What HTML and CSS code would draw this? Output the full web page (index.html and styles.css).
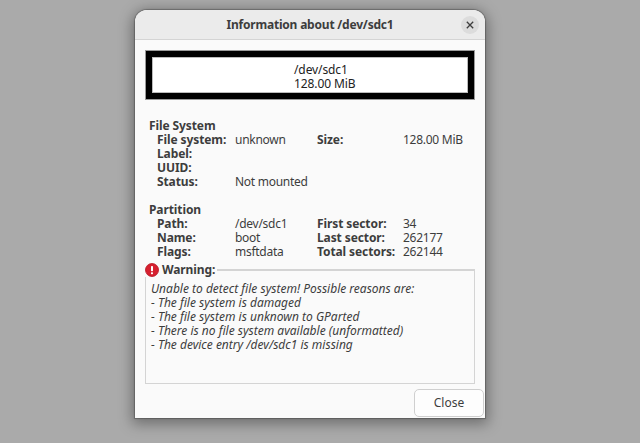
FILE: index.html
```html
<!DOCTYPE html>
<html lang="en">
<head>
<meta charset="utf-8">
<title>Information about /dev/sdc1</title>
<link rel="stylesheet" href="styles.css">
</head>
<body>
<div class="dialog">
  <header class="titlebar">
    <span class="title">Information about /dev/sdc1</span>
    <span class="close-x">
      <svg width="8" height="8" viewBox="0 0 8 8"><path d="M.8.8l6.4 6.4M7.2.8L.8 7.2" stroke="#3d3d3d" stroke-width="1.3" fill="none"/></svg>
    </span>
  </header>
  <main class="content">
    <div class="partition-box">
      <div>/dev/sdc1</div>
      <div>128.00 MiB</div>
    </div>
    <section class="section first">
      <h2 class="section-title">File System</h2>
      <div class="grid">
        <b>File system:</b><span>unknown</span><b>Size:</b><span>128.00 MiB</span>
        <b>Label:</b><span></span><span></span><span></span>
        <b>UUID:</b><span></span><span></span><span></span>
        <b>Status:</b><span>Not mounted</span><span></span><span></span>
      </div>
    </section>
    <section class="section second">
      <h2 class="section-title">Partition</h2>
      <div class="grid">
        <b>Path:</b><span>/dev/sdc1</span><b>First sector:</b><span>34</span>
        <b>Name:</b><span>boot</span><b>Last sector:</b><span>262177</span>
        <b>Flags:</b><span>msftdata</span><b>Total sectors:</b><span>262144</span>
      </div>
    </section>
    <fieldset class="warning">
      <legend class="warning-legend">
        <svg width="14" height="14" viewBox="0 0 14 14"><circle cx="7" cy="7" r="6.5" fill="#d6202f" stroke="#b5121f" stroke-width=".8"/><rect x="6" y="3" width="2" height="5.2" rx=".6" fill="#fff"/><rect x="6" y="9.2" width="2" height="2" rx=".6" fill="#fff"/></svg>
        <b>Warning:</b>
      </legend>
      <p class="warning-text">Unable to detect file system! Possible reasons are:<br>- The file system is damaged<br>- The file system is unknown to GParted<br>- There is no file system available (unformatted)<br>- The device entry /dev/sdc1 is missing</p>
    </fieldset>
  </main>
  <footer class="actions">
    <button class="close-btn" type="button">Close</button>
  </footer>
</div>
</body>
</html>
```
FILE: styles.css
```css
* { box-sizing: border-box; }
html, body { height: 100%; }
body {
  margin: 0;
  padding-right: 20px;
  background: #aaaaaa;
  display: flex;
  justify-content: center;
  align-items: flex-start;
  overflow: hidden;
  font-family: "Noto Sans", "Open Sans", sans-serif;
  font-size: 12px;
  line-height: 14px;
  color: #3d3d3d;
}
.dialog {
  width: 350px;
  height: 408px;
  margin-top: 10px;
  background: #fafafa;
  border-radius: 12px 12px 0 0;
  box-shadow: 0 0 1px 1px rgba(0,0,0,.25), 0 3px 14px 3px rgba(0,0,0,.35);
  display: flex;
  flex-direction: column;
}
.titlebar {
  height: 30px;
  flex: none;
  background: #ebebeb;
  border-bottom: 1px solid #d4d4d4;
  border-radius: 12px 12px 0 0;
  display: flex;
  align-items: center;
  justify-content: center;
  position: relative;
}
.title { font-weight: 700; letter-spacing: -.2px; }
.close-x {
  position: absolute;
  right: 6px;
  top: 6px;
  width: 18px;
  height: 18px;
  border-radius: 50%;
  background: #dcdcdc;
  display: flex;
  align-items: center;
  justify-content: center;
}
.content {
  flex: 1;
  padding: 10px 10px 0;
  display: flex;
  flex-direction: column;
}
.partition-box {
  height: 50px;
  background: #fff;
  border: 7px solid #000;
  outline: 1px solid #9a9a9a;
  outline-offset: -1px;
  color: #222;
  padding: 6px 0 0 142px;
  letter-spacing: -.1px;
  box-shadow: inset 0 0 0 1px #bbb;
}
.section { padding-left: 4px; }
.section.first { margin-top: 19px; }
.section.second { margin-top: 14px; }
.section-title { margin: 0; font: inherit; font-weight: 700; letter-spacing: -.1px; }
.grid {
  display: grid;
  grid-template-columns: 78px 82px 86px 1fr;
  grid-auto-rows: 14px;
  padding-left: 8px;
}
.grid b { font-weight: 700; white-space: nowrap; letter-spacing: -.1px; }
.grid span { white-space: nowrap; letter-spacing: -.27px; }
.warning {
  margin: 4px 0 0;
  padding: 0 5px;
  height: 121px;
  border: 1px solid #d4d4d4;
  border-top-width: 2px;
  min-width: 0;
}
.warning-legend {
  padding: 0 2px 0 0;
  margin-left: -6px;
  display: flex;
  align-items: center;
  gap: 3px;
}
.warning-legend b { letter-spacing: -.1px; }
.warning-text { margin: 5px 0 0; font-style: italic; }
.actions {
  flex: none;
  height: 33px;
  padding: 4px 1px 0 0;
  display: flex;
  justify-content: flex-end;
  align-items: flex-start;
}
.close-btn {
  width: 70px;
  height: 28px;
  background: #fdfdfd;
  border: 1px solid #cfcfcf;
  border-radius: 5px;
  font: inherit;
  color: #3d3d3d;
}
```
